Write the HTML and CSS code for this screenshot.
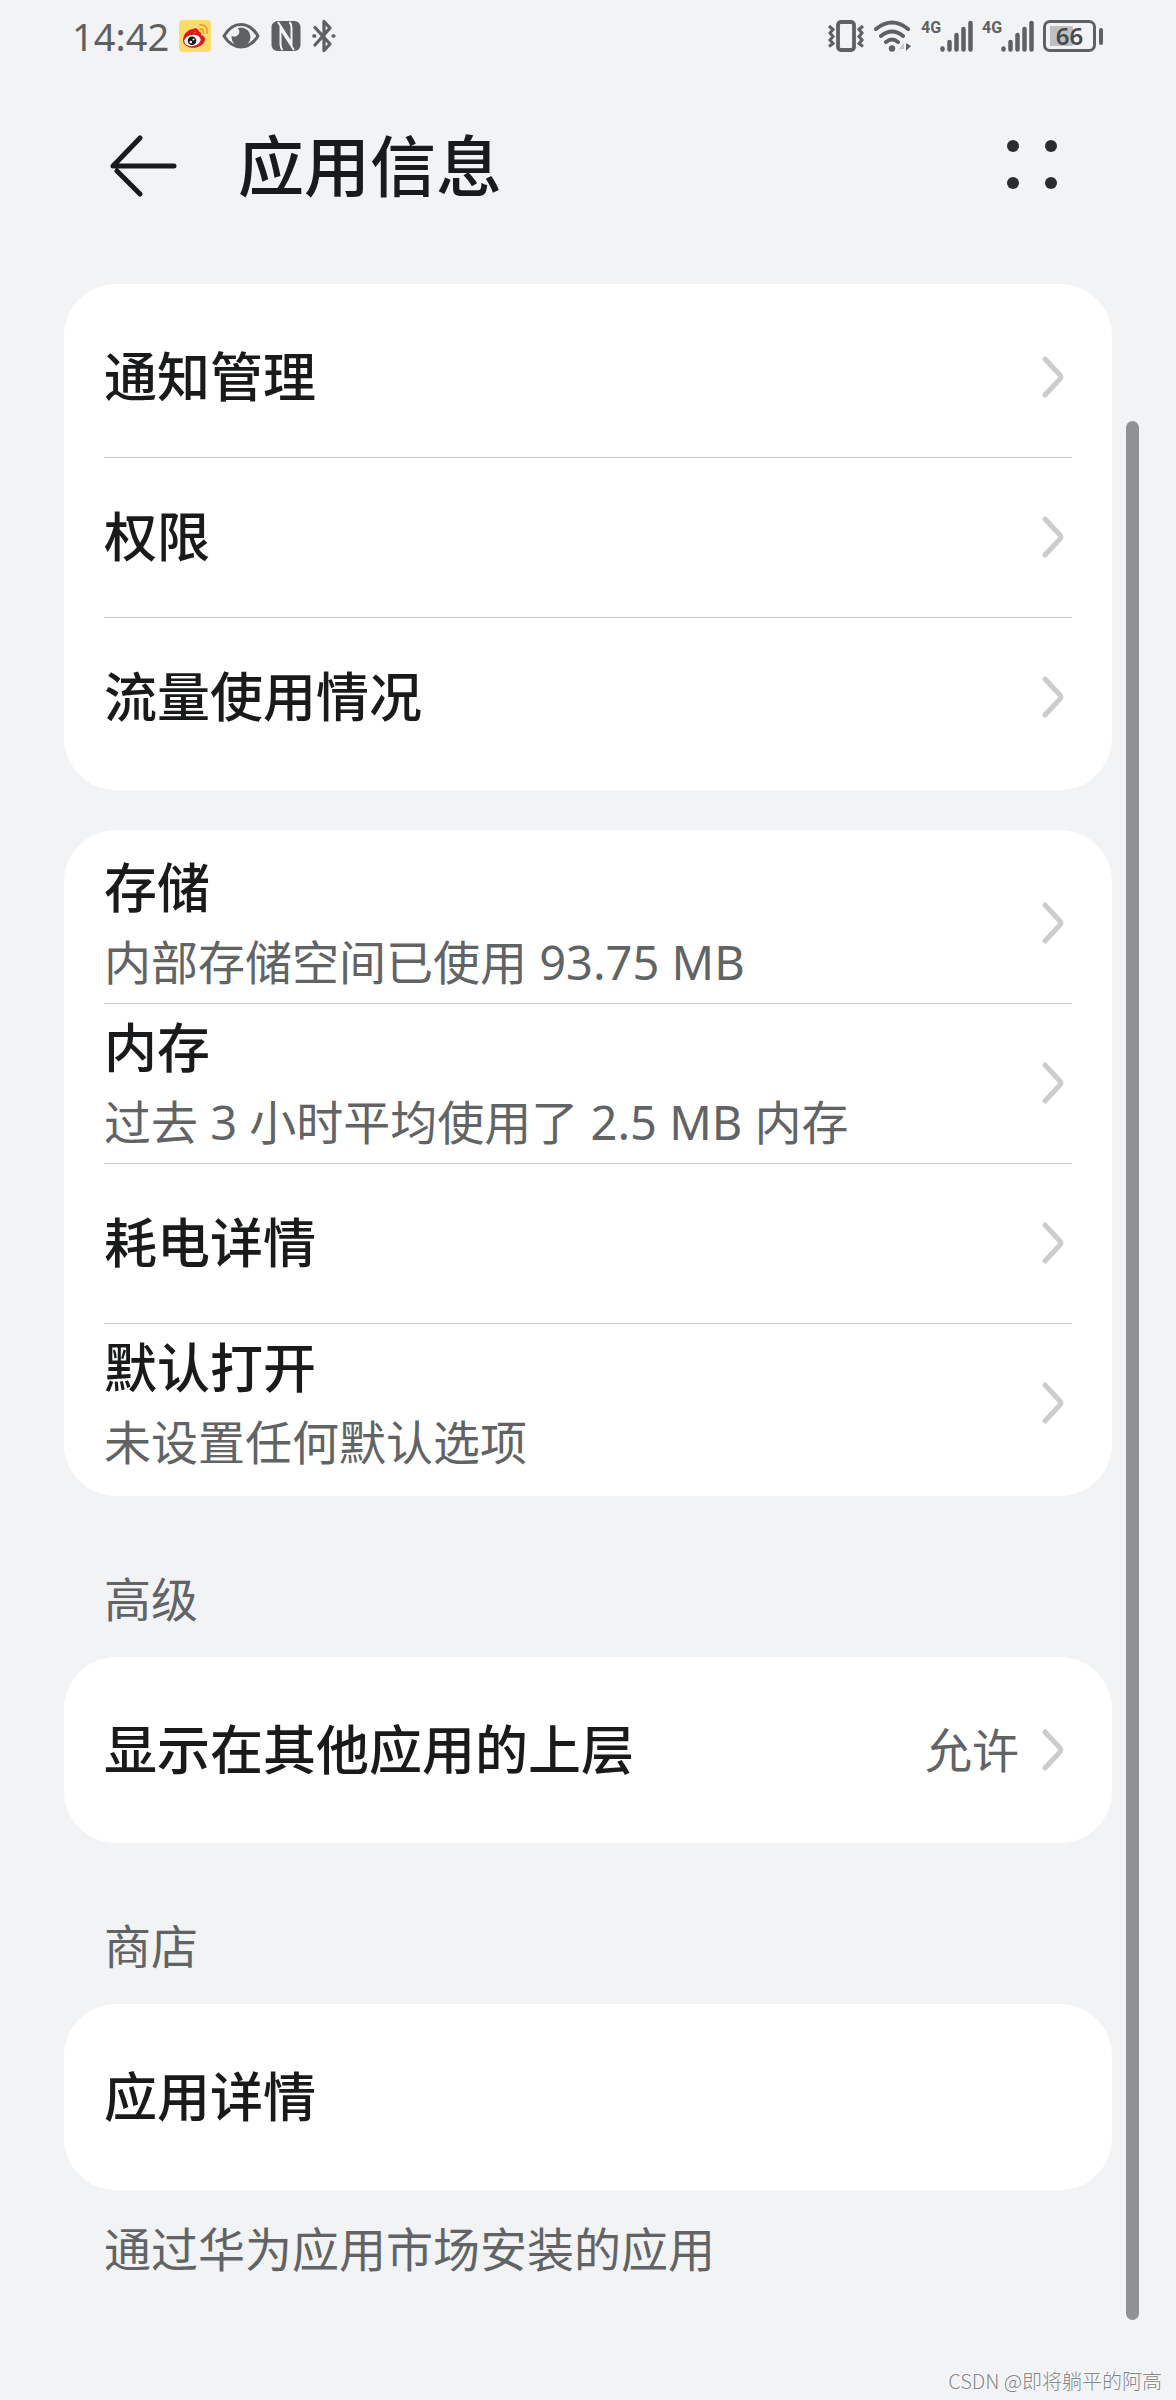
FILE: index.html
```html
<!DOCTYPE html>
<html lang="zh-CN">
<head>
<meta charset="utf-8">
<meta name="viewport" content="width=device-width, initial-scale=1">
<title>应用信息</title>
<link rel="stylesheet" href="styles.css">
</head>
<body>
<svg class="defs" aria-hidden="true">
  <symbol id="chevron" viewBox="0 0 24 44"><path d="M4 4 18.500 19.500Q21 22 18.500 24.500L4 40" fill="none" stroke="currentColor" stroke-width="5" stroke-linecap="round"/></symbol>
  <symbol id="bars" viewBox="0 0 33 32"><path d="M2.500 28.500v1M9.500 22v7.500M16.500 15v14.500M23.500 9v20.500M30.500 3v26.500" fill="none" stroke="currentColor" stroke-width="4.500" stroke-linecap="round"/></symbol>
</svg>

<div class="status">
  <time class="clock">14:42</time>
  <div class="status-left">
    <svg width="32" height="34" viewBox="0 0 32 34">
      <rect y="1" width="32" height="32" rx="4" fill="#fbdb6c"/>
      <path d="M4 21C4 14 12 8 15 11c1 1 1 2 0 3 4-2 8-2 7 2 6 1 5 8-1 11-7 4-17 1-17-6z" fill="#e1181b"/>
      <path d="M13 11c3-4 8-1 7 4" fill="#e1181b"/>
      <ellipse cx="13.500" cy="21.500" rx="8.200" ry="5.600" fill="#fff" transform="rotate(-8 13.500 21.500)"/>
      <circle cx="13" cy="21.800" r="4.300" fill="#151515"/><circle cx="11.800" cy="23" r="1.300" fill="#fff"/><circle cx="14.500" cy="20.500" r="1" fill="#fff"/>
      <path d="M21 6c5-1 8 3 7 8M21.500 10c2 0 3 1 3 4" fill="none" stroke="#f0a02c" stroke-width="1.800" stroke-linecap="round"/>
    </svg>
    <svg width="38" height="28" viewBox="0 0 38 28">
      <path d="M2 14C11-1.500 27-1.500 36 14 27 28.500 11 28.500 2 14z" fill="none" stroke="currentColor" stroke-width="3" stroke-linejoin="round"/>
      <circle cx="19" cy="15" r="9.500" fill="currentColor"/>
      <path d="M9 13C9 7 13 4 18 4c-3 1-2 3-1 4 2 5-5 9-8 5z" fill="#f2f3f5"/>
    </svg>
    <svg width="30" height="30" viewBox="0 0 30 30">
      <rect x=".500" width="29" height="30" rx="6" fill="currentColor"/>
      <path d="M7 1 20.500 22V7Q20.500 3 18.500 1M23 29 9.500 8V23Q9.500 27 11.500 29" fill="none" stroke="#f2f3f5" stroke-width="2"/>
    </svg>
    <svg width="24" height="34" viewBox="0 0 24 34" fill="none" stroke="currentColor" stroke-width="3.300" stroke-linecap="round" stroke-linejoin="round">
      <path d="M3 8.500 18 25 12 31.500V2.500L18 9 3 26M1.800 17h1M21 17h1"/>
    </svg>
  </div>
  <div class="status-right">
    <svg width="38" height="32" viewBox="0 0 38 32" fill="none" stroke="currentColor">
      <rect x="11" y="2" width="16" height="28" rx="3" stroke-width="3.800"/>
      <path d="M2 6l4 3.500-3 3.500 3 3.500-3 3.500 3 3.500-4 3M36 6l-4 3.500 3 3.500-3 3.500 3 3.500-3 3.500 4 3" stroke-width="3"/>
    </svg>
    <svg width="38" height="32" viewBox="0 0 38 32">
      <path d="M2 9Q18-4 34 9M7 16Q18 7 29 16M12 22Q18 17 24 22" fill="none" stroke="currentColor" stroke-width="4" stroke-linecap="round"/>
      <circle cx="18" cy="28.500" r="3.200" fill="currentColor"/>
      <path d="M25 29h5v-6z" fill="#c4c5c7"/><path d="M32 23v8l5-5z" fill="currentColor"/>
    </svg>
    <div class="signal"><span>4G</span><svg width="33" height="32"><use href="#bars"/></svg></div>
    <div class="signal"><span>4G</span><svg width="33" height="32"><use href="#bars"/></svg></div>
    <div class="battery"><span class="cell">66</span><i class="nub"></i></div>
  </div>
</div>

<header class="header">
  <button class="icon-button" type="button" aria-label="返回">
    <svg width="68" height="64" viewBox="0 0 68 64" fill="none" stroke="currentColor" stroke-width="5" stroke-linecap="round" stroke-linejoin="round">
      <path d="M65 33H4L31 5M8 38 31 61"/>
    </svg>
  </button>
  <h1 class="title">应用信息</h1>
  <button class="icon-button" type="button" aria-label="更多">
    <svg width="52" height="50" viewBox="0 0 52 50" fill="#2b2c2e"><circle cx="7" cy="6" r="6"/><circle cx="45" cy="6" r="6"/><circle cx="7" cy="43" r="6"/><circle cx="45" cy="43" r="6"/></svg>
  </button>
</header>

<main class="content">
  <nav class="card">
    <a class="row" href="#notifications"><span class="name">通知管理</span><svg class="chevron"><use href="#chevron"/></svg></a>
    <a class="row" href="#permissions"><span class="name">权限</span><svg class="chevron"><use href="#chevron"/></svg></a>
    <a class="row" href="#data"><span class="name">流量使用情况</span><svg class="chevron"><use href="#chevron"/></svg></a>
  </nav>
  <nav class="card card-next">
    <a class="row" href="#storage"><span class="label"><span class="name">存储</span><span class="note">内部存储空间已使用 93.75 MB</span></span><svg class="chevron"><use href="#chevron"/></svg></a>
    <a class="row" href="#memory"><span class="label"><span class="name">内存</span><span class="note">过去 3 小时平均使用了 2.5 MB 内存</span></span><svg class="chevron"><use href="#chevron"/></svg></a>
    <a class="row" href="#battery"><span class="name">耗电详情</span><svg class="chevron"><use href="#chevron"/></svg></a>
    <a class="row" href="#defaults"><span class="label"><span class="name">默认打开</span><span class="note">未设置任何默认选项</span></span><svg class="chevron"><use href="#chevron"/></svg></a>
  </nav>
  <h2 class="section">高级</h2>
  <nav class="card">
    <a class="row" href="#overlay"><span class="name">显示在其他应用的上层</span><span class="note value">允许</span><svg class="chevron"><use href="#chevron"/></svg></a>
  </nav>
  <h2 class="section">商店</h2>
  <nav class="card">
    <a class="row" href="#details"><span class="name">应用详情</span></a>
  </nav>
  <p class="footnote">通过华为应用市场安装的应用</p>
</main>

<div class="scroll-thumb"></div>
<div class="watermark">CSDN @即将躺平的阿高</div>
</body>
</html>
```
FILE: styles.css
```css
* { box-sizing: border-box; }

body {
  position: relative;
  min-height: 100vh;
  margin: 0;
  background: #f2f3f5;
  color: #191a1b;
  font-family: "Noto Sans", "Noto Sans CJK SC", sans-serif;
}

svg { display: block; flex: none; }
.defs { position: absolute; width: 0; height: 0; }

/* Status bar */
.status {
  display: flex;
  align-items: center;
  height: 72px;
  padding: 0 73px 0 72px;
  color: #5f6062;
}
.clock { font-size: 38px; line-height: 72px; }
.status-left { display: flex; align-items: center; gap: 11px; margin-left: 10px; }
.status-right { display: flex; align-items: center; gap: 9px; margin-left: auto; }
.signal { display: flex; align-items: flex-start; }
.signal span { width: 19px; font: bold 16px/16px Roboto, sans-serif; }
.battery { display: flex; align-items: center; gap: 3px; }
.cell {
  width: 53px;
  height: 32px;
  border: 3px solid #5f6062;
  border-radius: 7px;
  background: linear-gradient(#bfc0c2, #bfc0c2) 4px center / 23px 20px no-repeat;
  color: #48494b;
  font-size: 24px;
  font-weight: 600;
  line-height: 26px;
  text-align: center;
}
.nub { width: 4px; height: 17px; border-radius: 2px; background: currentColor; }

/* Title bar */
.header {
  display: flex;
  align-items: center;
  height: 186px;
  padding: 0 118px 0 109px;
}
.icon-button { padding: 0; border: 0; background: none; color: inherit; }
.title {
  flex: 1;
  margin: 0 0 0 61px;
  font-size: 66px;
  font-weight: 500;
  line-height: 88px;
}

/* Cards */
.content { padding: 26px 64px 0; }
.card { padding: 13px 40px; border-radius: 52px; background: #fff; }
.card-next { margin-top: 40px; }
.row {
  display: flex;
  align-items: center;
  height: 160px;
  padding-right: 7px;
  color: inherit;
  text-decoration: none;
}
.row + .row { box-shadow: inset 0 1px #c9cacb; }
.label { display: flex; flex-direction: column; }
.name { font-size: 53px; font-weight: 500; line-height: 78px; }
.note, .section, .footnote {
  color: #626364;
  font-size: 47px;
  font-weight: 400;
  line-height: 71px;
}
.chevron { width: 24px; height: 44px; margin-left: auto; color: #ccc; }
.value { margin-left: auto; }
.value + .chevron { margin-left: 22px; }
.section { margin: 0; padding: 68px 40px 22px; }
.footnote { margin: 0; padding: 24px 40px 0; }

.scroll-thumb {
  position: absolute;
  top: 421px;
  right: 37px;
  bottom: 80px;
  width: 13px;
  border-radius: 7px;
  background: #909193;
}
.watermark {
  position: absolute;
  right: 14px;
  bottom: 6px;
  color: #848587;
  font-family: "Noto Sans CJK SC", sans-serif;
  font-size: 20px;
  font-weight: 300;
  line-height: 26px;
  text-shadow: -1px -1px #fff;
}
```
